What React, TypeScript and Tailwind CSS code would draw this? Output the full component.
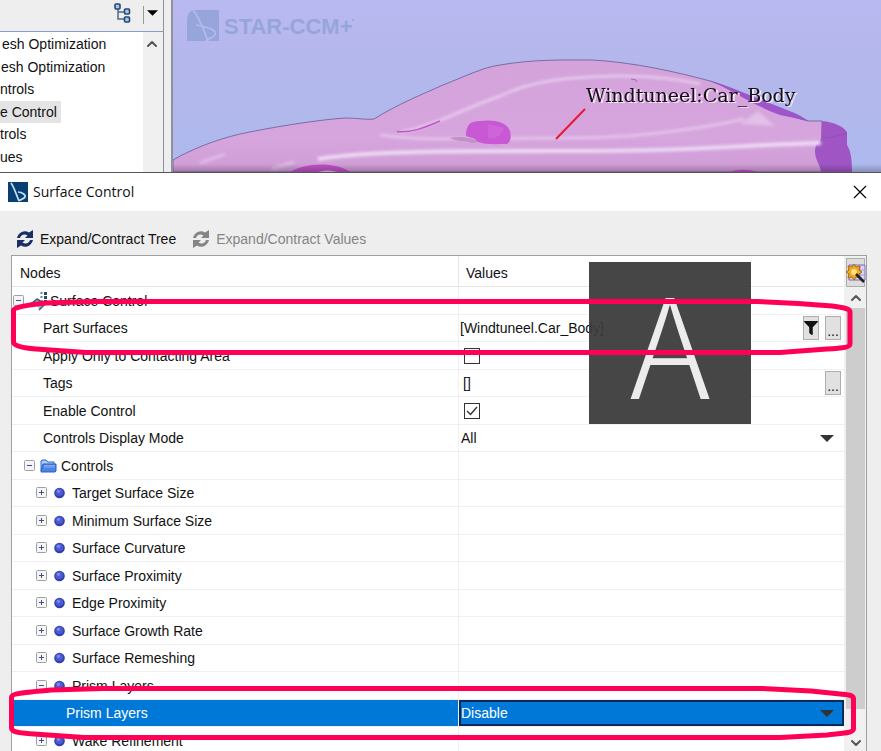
import type { ReactNode } from "react";
import { ChevronDown, ChevronUp } from "lucide-react";
import { FaFilter } from "react-icons/fa";

type Row = {
  label: string;
  kind: "root" | "property" | "folder" | "item" | "openItem" | "selected";
  value?: ReactNode;
};

const treeItems = [
  { label: "esh Optimization", style: "pl-0.5" },
  { label: "esh Optimization", style: "pl-px" },
  { label: "ntrols", style: "" },
  { label: "e Control", style: "bg-[#e4e4e4] pr-1" },
  { label: "trols", style: "" },
  { label: "ues", style: "" },
];

const CompanyLogo = ({ className }: { className: string }) => (
  <svg viewBox="0 0 20 20" className={className} aria-hidden="true">
    <path d="M0 0h20v20H0z" fill="#083e72" />
    <path d="M3 1c3 4 5 11 8 18M10 10c4 0 8 3 7 5-1 2-4 2-6 4" fill="none" stroke="#bfe0f4" strokeWidth="1.7" />
  </svg>
);

const RefreshIcon = ({ className }: { className: string }) => (
  <svg viewBox="0 0 18 18" className={className} fill="currentColor" aria-hidden="true">
    <path d="M1 8C2 3 8-1 13 2.500L17 0V8H9L11.500 5.500C8 3.500 5 5 4 8Z" />
    <path d="M17 10C16 15 10 19 5 15.500L1 18V10H9L6.500 12.500C10 14.500 13 13 14 10Z" />
  </svg>
);

const Expander = ({ open, label }: { open?: boolean; label: string }) => (
  <button type="button" aria-label={label} className="size-3 shrink-0">
    <svg viewBox="0 0 12 12" className="size-3">
      <rect x="0.5" y="0.5" width="10" height="10" rx="1" fill="#f5f5f5" stroke="#a0a0a0" />
      <path d={open ? "M3 5.5h5" : "M3 5.5h5M5.5 3v5"} stroke="#3d5191" />
    </svg>
  </button>
);

const Dot = () => (
  <svg viewBox="0 0 12 12" className="size-3 shrink-0" aria-hidden="true">
    <circle cx="5.5" cy="6" r="5.3" fill="#3440b0" />
    <circle cx="5.3" cy="5.3" r="3.8" fill="#4c5bcf" />
    <circle cx="4.5" cy="4.3" r="1.6" fill="#7d8bea" />
  </svg>
);

const Folder = () => (
  <svg viewBox="0 0 17 14" className="h-3.5 w-[17px] shrink-0" aria-hidden="true">
    <path d="M1 12V2l1-1h4l2 2h6v2" fill="#a9cdf8" stroke="#2c64c9" />
    <path d="M1 12.5 3 5h13v7l-1 1H1z" fill="#4d83e4" stroke="#2c5fc5" />
    <path d="M4 6.5h11M4 8h11" stroke="#86b0f5" />
  </svg>
);

const SurfaceIcon = () => (
  <svg viewBox="0 0 20 20" className="size-5 shrink-0" aria-hidden="true">
    <path d="M0 14c4-1 7-3 10-6l9 5-6 6c-2-4-6-6-9-4z" fill="#a5c2d1" />
    <path d="M0 14c4-1 7-3 10-6l8 5-6 6" fill="none" stroke="#356276" strokeWidth="1.5" />
    <path d="M14.500 1v10" stroke="#4c8ca8" strokeWidth="2" strokeDasharray="2 2" />
    <path d="M18.500 1v10" stroke="#244c67" strokeWidth="3" strokeDasharray="3 1" />
  </svg>
);

const DownArrow = ({ className }: { className: string }) => (
  <svg viewBox="0 0 14 7" className={className} aria-hidden="true">
    <path d="M0 0h14L7 7z" fill="currentColor" />
  </svg>
);

const MoreButton = ({ label }: { label: string }) => (
  <button
    type="button"
    aria-label={label}
    className="mr-[3px] flex h-6 w-4 items-end justify-center border border-[#adadad] bg-[#e1e1e1] text-sm leading-4"
  >
    ...
  </button>
);

const CheckBox = ({ id, checked }: { id: string; checked?: boolean }) => (
  <span className="ml-[5px] flex items-center">
    <input
      id={id}
      type="checkbox"
      defaultChecked={checked}
      className="peer size-4 appearance-none border border-[#333] bg-white"
    />
    <svg viewBox="0 0 16 16" className="pointer-events-none -ml-4 hidden size-4 peer-checked:block" aria-hidden="true">
      <path d="m3 8 3.5 3.5L13 4" fill="none" stroke="#333" strokeWidth="1.4" />
    </svg>
  </span>
);

const rows: Row[] = [
  { label: "Surface Control", kind: "root" },
  {
    label: "Part Surfaces",
    kind: "property",
    value: (
      <>
        <span className="min-w-0 flex-1 pl-px">[Windtuneel.Car_Body]</span>
        <button
          type="button"
          aria-label="Filter part surfaces"
          className="mr-1.5 flex h-6 w-4 items-center justify-center border border-[#adadad] bg-[#e1e1e1]"
        >
          <FaFilter className="size-3.5 shrink-0" />
        </button>
        <MoreButton label="Choose part surfaces" />
      </>
    ),
  },
  { label: "Apply Only to Contacting Area", kind: "property", value: <CheckBox id="row-2" /> },
  {
    label: "Tags",
    kind: "property",
    value: (
      <>
        <span className="flex-1 pl-1">[]</span>
        <MoreButton label="Choose tags" />
      </>
    ),
  },
  { label: "Enable Control", kind: "property", value: <CheckBox id="row-4" checked /> },
  {
    label: "Controls Display Mode",
    kind: "property",
    value: (
      <>
        <select id="row-5" className="h-6 flex-1 appearance-none pl-0.5">
          <option>All</option>
        </select>
        <DownArrow className="pointer-events-none mr-2.5 -ml-6 h-[7px] w-3.5 text-[#333]" />
      </>
    ),
  },
  { label: "Controls", kind: "folder" },
  { label: "Target Surface Size", kind: "item" },
  { label: "Minimum Surface Size", kind: "item" },
  { label: "Surface Curvature", kind: "item" },
  { label: "Surface Proximity", kind: "item" },
  { label: "Edge Proximity", kind: "item" },
  { label: "Surface Growth Rate", kind: "item" },
  { label: "Surface Remeshing", kind: "item" },
  { label: "Prism Layers", kind: "openItem" },
  {
    label: "Prism Layers",
    kind: "selected",
    value: (
      <>
        <select id="row-15" className="h-[26px] flex-1 appearance-none border-2 border-[#08285a] text-white">
          <option>Disable</option>
        </select>
        <DownArrow className="pointer-events-none mr-2.5 -ml-6 h-[7px] w-3.5 text-[#333]" />
      </>
    ),
  },
  { label: "Wake Refinement", kind: "item" },
];

const NodeCell = ({ row, index }: { row: Row; index: number }) => {
  const text = <label htmlFor={`row-${index}`}>{row.label}</label>;
  switch (row.kind) {
    case "root":
      return (
        <div className="flex items-center pl-px">
          <Expander open label="Collapse Surface Control" />
          <span className="mr-[3px] ml-0.5">
            <SurfaceIcon />
          </span>
          <span>{row.label}</span>
        </div>
      );
    case "folder":
      return (
        <div className="flex items-center gap-1 pl-3">
          <Expander open label="Collapse Controls" />
          <Folder />
          <span>{row.label}</span>
        </div>
      );
    case "item":
    case "openItem":
      return (
        <div className="flex items-center pl-6">
          <Expander open={row.kind === "openItem"} label={`Toggle ${row.label}`} />
          <span className="mr-1.5 ml-1.5">
            <Dot />
          </span>
          <span>{row.label}</span>
        </div>
      );
    case "selected":
      return <div className="pl-[54px]">{text}</div>;
    default:
      return <div className="pl-[31px]">{index !== 1 && index !== 3 ? text : row.label}</div>;
  }
};

const SceneTree = () => (
  <aside className="flex w-[164px] shrink-0 flex-col border-r border-[#8d929b] bg-white">
    <div className="flex h-8 shrink-0 items-start justify-end border-b border-[#829dc6] bg-[#eee] pr-[5px]">
      <button type="button" aria-label="Tree view" className="mt-[3px] mr-3">
        <svg viewBox="0 0 17 20" className="h-5 w-[17px]">
          <path d="M4 5v11h7M4 9h7" fill="none" stroke="#51688c" strokeWidth="1.5" />
          <g fill="#a9c8ec" stroke="#254774" strokeWidth="1.6">
            <rect x="1" y="1" width="5" height="5" rx="1" />
            <rect x="10.5" y="6" width="5" height="5" rx="1" />
            <rect x="10.5" y="14" width="5" height="5" rx="1" />
          </g>
        </svg>
      </button>
      <button type="button" aria-label="Tree options" className="mt-1.5 flex h-[18px] items-start border-l border-[#999] pt-1 pl-[3px]">
        <DownArrow className="h-1.5 w-[11px] text-black" />
      </button>
    </div>
    <div className="flex min-h-0 flex-1">
      <ul className="min-w-0 flex-1 overflow-hidden pt-px">
        {treeItems.map((item, i) => (
          <li key={i} className="h-[22px] odd:h-[23px]">
            <span className={`inline-block leading-[22px] whitespace-nowrap ${item.style}`}>{item.label}</span>
          </li>
        ))}
      </ul>
      <div className="w-5 bg-[#f0f0f0]">
        <button type="button" aria-label="Scroll tree up" className="mt-1 ml-px">
          <ChevronUp className="size-4 text-[#555]" strokeWidth={3} />
        </button>
      </div>
    </div>
  </aside>
);

const CarScene = () => (
  <svg viewBox="173 0 708 172" preserveAspectRatio="xMinYMin slice" className="h-full min-w-0 flex-1" role="img" aria-label="Car body">
    <defs>
      <linearGradient id="sky" x1="0" y1="0" x2="0" y2="1">
        <stop offset="0" stopColor="#b8b9f0" />
        <stop offset="0.4" stopColor="#b4b7eb" />
        <stop offset="1" stopColor="#adb9ed" />
      </linearGradient>
      <linearGradient id="body" x1="0" y1="0" x2="0" y2="1">
        <stop offset="0" stopColor="#d3a3da" />
        <stop offset="0.7" stopColor="#d7a5de" />
        <stop offset="1" stopColor="#cf9cd6" />
      </linearGradient>
      <linearGradient id="shade" x1="0" y1="0" x2="0" y2="1">
        <stop offset="0" stopColor="#000" stopOpacity="0" />
        <stop offset="1" stopColor="#000" stopOpacity="0.22" />
      </linearGradient>
      <filter id="soft" x="-10%" y="-50%" width="120%" height="200%">
        <feGaussianBlur stdDeviation="1.5" />
      </filter>
    </defs>
    <path d="M173 0h708v172H173z" fill="url(#sky)" />
    <g opacity="0.75">
      <path d="M187 41V21c0-6 2-9 6-11h26v31z" fill="#8c9fd5" />
      <path d="M193 10c7 8 10 19 15 31M196 25c12 2 24 6 18 11-2 2-6 2-8 5" fill="none" stroke="#b6bbea" strokeWidth="1.7" />
      <text x="224" y="34" fill="#8c9fd5" className="font-['Liberation_Sans',sans-serif] text-[22px] font-bold">
        STAR-CCM+
      </text>
      <circle cx="353" cy="20" r="1" fill="#8c9fd5" />
    </g>
    <path
      d="M173 160C192 149 215 140 240 134C268 128 315 120 345 118C357 118 366 120 374 119C396 105 423 94 443 85C466 76 484 67 500 65C535 59 565 60 592 60C632 62 677 72 710 81C752 96 770 112 808 121H822V172H173Z"
      fill="url(#body)"
      stroke="#796da6"
    />
    <path d="M709 80C728 86 742 92 757 98L797 114L809 121L780 115C755 106 737 93 709 80Z" fill="#9d55c9" />
    <path d="M822 121C834 122 844 127 847 132V145C851 151 852 160 852 172H821C820 164 815 160 815 151C815 143 820 144 821 138Z" fill="#a055c5" />
    <path d="M822 137C830 139 838 135 846 134" fill="none" stroke="#8c46b4" opacity="0.5" />
    <g fill="none" stroke="#eddcf4" filter="url(#soft)">
      <path d="M400 132C430 128 460 110 500 96C535 79 573 77 620 76C655 76 675 79 700 84" strokeWidth="2.500" opacity="0.8" />
      <path d="M380 135C430 142 485 137 580 138C650 137 714 126 744 119" strokeWidth="2" opacity="0.8" />
      <path d="M318 159C370 150 480 151 590 151C690 151 740 145 821 143" strokeWidth="4" />
      <path d="M200 163 225 154M272 169 294 162" strokeWidth="3" opacity="0.5" />
      <path d="M740 124 758 111 775 126Z" fill="#eddcf4" stroke="none" opacity="0.5" />
    </g>
    <path d="M397 131.500C412 133 426 127 440 121" fill="none" stroke="#bd57c5" strokeWidth="1.4" />
    <path d="M290 172C305 163 333 161 351 172Z" fill="#c051c8" />
    <path d="M318 172C324 170 330 170 337 172Z" fill="#e5bdeb" />
    <path d="M450 138C459 136 472 137 479 142L472 143C464 140 457 142 450 138Z" fill="#bf91c4" />
    <path d="M466 136C466 124 471 121 480 121C493 119 506 122 509 129C512 134 511 142 507 144C496 144 486 145 478 142C475 138 471 138 466 136Z" fill="#c858d3" />
    <path d="M488 124V138C497 139 502 135 504 128Z" fill="#cf63d9" />
    <path d="M631 79l5 1 1 2" fill="none" stroke="#bd57c5" />
    <path d="M730 172C736 169 750 169 757 172Z" fill="#c052c7" />
    <path d="M585 109 556 139" stroke="#e9182e" strokeWidth="2" />
    <text x="586" y="102" fill="#171117" className="font-['DejaVu_Serif',serif] text-[19px] drop-shadow-[2px_1px_0_#f4e9f6]">
      Windtuneel:Car_Body
    </text>
    <path d="M173 164h708v8H173z" fill="url(#shade)" />
  </svg>
);

const Annotations = () => (
  <svg
    viewBox="0 173 881 579"
    preserveAspectRatio="none"
    className="pointer-events-none absolute inset-x-0 top-0 h-[579px] w-full"
    aria-hidden="true"
  >
    <g fill="none" stroke="#ff0055" strokeWidth="5" strokeLinejoin="round">
      <path d="M13.500 310C15 307 28 305 46 303L94 301.500H757L798 303.500L832 306C846 308 850 309 850 312V344C850 347 844 348 827 349L780 352.500H86L36 349C23 348 13.500 346 13.500 342Z" />
      <path d="M11.500 697C12 693 32 692 51 690L103 688.500H762L811 691L840 694C850 695 853.500 695 853.500 699V729C853 733 844 733 827 735L780 737.500H84L34 734C18 733 11.500 732 11.500 728Z" />
    </g>
  </svg>
);

const WizardIcon = () => (
  <svg viewBox="0 0 20 24" className="h-6 w-5 shrink-0" aria-hidden="true">
    <path d="M3 4h16v15H3z" fill="#dad5f6" stroke="#7a6bb4" />
    <path d="M3 9h16M3 14h16M9 4v15M14 4v15" stroke="#a79ad5" />
    <path d="m8 3 2 3 4-1-1 4 3 2-3 2 1 4-4-1-2 3-2-3-4 1 1-4-3-2 3-2-1-4 4 1z" fill="#eea928" stroke="#a76b14" />
    <circle cx="8" cy="11" r="3" fill="#ffe177" />
    <path d="m10 13 8 8" stroke="#222" strokeWidth="2.500" />
  </svg>
);

const PropertyTable = () => (
  <div className="mr-3.5 ml-[11px] flex min-h-0 flex-1 overflow-hidden border border-b-0 border-[#a0a0a0] bg-white">
    <div className="min-w-0 flex-1">
      <table className="w-full table-fixed border-separate border-spacing-0">
        <colgroup>
          <col className="w-[447px]" />
          <col />
        </colgroup>
        <thead>
          <tr className="h-[31px] text-left">
            <th className="border-r border-b border-[#e5e5e5] p-0 pt-1 pl-2 font-normal">Nodes</th>
            <th className="border-b border-[#e5e5e5] p-0 pt-1 pl-[7px] font-normal">Values</th>
          </tr>
        </thead>
        <tbody>
          {rows.map((row, i) => (
            <tr
              key={i}
              className={
                row.kind === "selected"
                  ? "h-[27px] bg-[#0078d7] text-white"
                  : "h-[27px] odd:h-[28px]"
              }
            >
              <td className="border-r border-b border-[#f0f0f0] p-0">
                <NodeCell row={row} index={i} />
              </td>
              <td className="border-b border-[#f0f0f0] p-0">
                <div className="flex h-[26px] items-center">{row.value}</div>
              </td>
            </tr>
          ))}
        </tbody>
      </table>
    </div>
    <div className="flex w-[22px] flex-col bg-[#f0f0f0] pr-px pl-0.5">
      <button
        type="button"
        aria-label="Configure columns"
        className="mt-0.5 flex h-[29px] shrink-0 items-center justify-center border border-[#adadad] bg-[#ddd]"
      >
        <WizardIcon />
      </button>
      <button type="button" aria-label="Scroll up" className="flex h-[21px] shrink-0 items-center justify-center">
        <ChevronUp className="size-4 text-[#555]" strokeWidth={3} />
      </button>
      <div className="flex-1 bg-[#cdcdcd]" />
      <button type="button" aria-label="Scroll down" className="flex h-[42px] shrink-0 items-end justify-center">
        <ChevronDown className="size-4 text-[#555]" strokeWidth={3} />
      </button>
    </div>
  </div>
);

const SurfaceControlDialog = () => (
  <section className="relative flex min-h-0 flex-1 flex-col border-t border-[#555] bg-[#eee]">
    <header className="flex h-[38px] shrink-0 items-center bg-white pr-3.5 pl-2">
      <CompanyLogo className="size-5" />
      <h1 className="ml-[5px] flex-1 font-['Open_Sans',sans-serif] text-sm">Surface Control</h1>
      <button type="button" aria-label="Close">
        <svg viewBox="0 0 14 14" className="size-3.5">
          <path d="m1 1 12 12M13 1 1 13" stroke="#000" strokeWidth="1.2" />
        </svg>
      </button>
    </header>
    <div className="flex h-11 shrink-0 items-center gap-4 pt-3 pl-4">
      <button type="button" className="flex items-center gap-1.5">
        <RefreshIcon className="size-[18px] text-[#1b2f66]" />
        Expand/Contract Tree
      </button>
      <button type="button" disabled className="flex items-center gap-1.5 text-[#858585]">
        <RefreshIcon className="size-[18px]" />
        Expand/Contract Values
      </button>
    </div>
    <PropertyTable />
    <div className="absolute top-[89px] right-[130px] flex h-[162px] w-[162px] items-center justify-center bg-[#3c3c3c]/95 pb-2 font-['Noto_Sans_CJK_JP',sans-serif] text-[138px] leading-[162px] font-light text-[#ececec]">
      A
    </div>
    <Annotations />
  </section>
);

export default function App() {
  return (
    <main className="flex h-screen flex-col overflow-hidden bg-[#eee] font-['Liberation_Sans',Arial,sans-serif] text-sm text-[#111]">
      <div className="flex h-[172px] shrink-0">
        <SceneTree />
        <div className="w-[9px] shrink-0 border-r-2 border-[#8e929a] bg-[#eee]" />
        <CarScene />
      </div>
      <SurfaceControlDialog />
    </main>
  );
}
